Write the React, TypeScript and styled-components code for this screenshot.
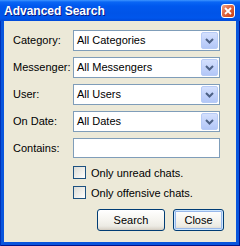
import React from "react";
import styled, { createGlobalStyle } from "styled-components";

const Global = createGlobalStyle`
  html, body { margin: 0; padding: 0; background: #ffffff; }
  body { font-family: "Liberation Sans", Arial, sans-serif; font-size: 11px; color: #000; }
`;

const Frame = styled.div`
  width: 240px;
  height: 246px;
  box-sizing: border-box;
  display: flex;
  flex-direction: column;
  background: #0855dd;
  box-shadow: inset 1px 0 0 #0032b8, inset -1px 0 0 #00138c, inset 0 -1px 0 #00138c;
`;

const TitleBar = styled.div`
  height: 21px;
  flex: none;
  display: flex;
  align-items: center;
  justify-content: space-between;
  padding: 0 5px 0 4px;
  background: linear-gradient(
    to bottom,
    #3d95ff 0px,
    #0a66f5 2px,
    #0058ee 6px,
    #0054e8 13px,
    #0056ec 18px,
    #0049d8 21px
  );
`;

const Title = styled.span`
  font-family: "Liberation Sans", Arial, sans-serif;
  font-weight: bold;
  font-size: 12px;
  color: #ffffff;
  text-shadow: 1px 1px 0 #0a1883;
  line-height: 14px;
  padding-top: 1px;
`;

const CloseBox = styled.div`
  width: 14px;
  height: 14px;
  box-sizing: border-box;
  border: 1px solid #ffffff;
  border-radius: 3px;
  background: linear-gradient(135deg, #f0a58b 0%, #e06a45 40%, #c93d14 100%);
  display: flex;
  align-items: center;
  justify-content: center;
`;

const Client = styled.div`
  flex: 1;
  margin: 0 4px 4px 4px;
  background: #ece9d8;
  padding: 9px 16px 0 9px;
  display: flex;
  flex-direction: column;
`;

const FormGrid = styled.div`
  display: grid;
  grid-template-columns: 60px 147px;
  row-gap: 6px;
  align-items: center;
`;

const Label = styled.label`
  font-size: 11px;
  line-height: 13px;
  color: #000;
`;

const Combo = styled.div`
  height: 21px;
  box-sizing: border-box;
  border: 1px solid #7f9db9;
  background: #ffffff;
  display: flex;
  align-items: center;
  justify-content: space-between;
  padding: 0 1px 0 3px;
`;

const ComboText = styled.span`
  font-size: 11px;
  line-height: 13px;
`;

const DropButton = styled.div`
  width: 17px;
  height: 17px;
  box-sizing: border-box;
  border: 1px solid #b7cbf6;
  border-radius: 2px;
  background: linear-gradient(to bottom, #d4e0fd 0%, #c3d3fb 50%, #b3c7f7 100%);
  display: flex;
  align-items: center;
  justify-content: center;
`;

const TextBox = styled.div`
  height: 20px;
  box-sizing: border-box;
  border: 1px solid #7f9db9;
  background: #ffffff;
`;

const Checks = styled.div`
  display: flex;
  flex-direction: column;
  gap: 7px;
  margin: 8px 0 0 60px;
`;

const CheckRow = styled.div`
  display: flex;
  align-items: center;
  gap: 5px;
`;

const CheckBox = styled.span`
  width: 13px;
  height: 13px;
  box-sizing: border-box;
  border: 1px solid #1c5180;
  background: linear-gradient(135deg, #dcdcd7 0%, #f0f0ec 60%, #ffffff 100%);
`;

const Buttons = styled.div`
  display: flex;
  justify-content: flex-end;
  gap: 8px;
  margin: 10px -4px 0 0;
`;

const Button = styled.button<{ $width: number; $focused?: boolean }>`
  width: ${(p) => p.$width}px;
  height: 22px;
  box-sizing: border-box;
  border: 1px solid #003c74;
  border-radius: 3px;
  font-family: "Liberation Sans", Arial, sans-serif;
  font-size: 11px;
  color: #000;
  padding: 0;
  background: linear-gradient(to bottom, #ffffff 0%, #f5f4ef 50%, #ecebe4 80%, #d6d0c5 100%);
  box-shadow: ${(p) =>
    p.$focused
      ? "inset 0 0 0 1px #cee7ff, inset 0 0 0 2px #98b8ea"
      : "inset 0 -1px 0 #d6d0c5"};
`;

const Chevron = () => (
  <svg width="9" height="6" viewBox="0 0 9 6">
    <path d="M1 1 L4.5 4.5 L8 1" fill="none" stroke="#4d6185" strokeWidth="2" />
  </svg>
);

const CloseX = () => (
  <svg width="8" height="8" viewBox="0 0 8 8">
    <path d="M1 1 L7 7 M7 1 L1 7" stroke="#ffffff" strokeWidth="1.8" />
  </svg>
);

const fields = [
  { label: "Category:", value: "All Categories" },
  { label: "Messenger:", value: "All Messengers" },
  { label: "User:", value: "All Users" },
  { label: "On Date:", value: "All Dates" },
];

export default function App() {
  return (
    <>
      <Global />
      <Frame>
        <TitleBar>
          <Title>Advanced Search</Title>
          <CloseBox>
            <CloseX />
          </CloseBox>
        </TitleBar>
        <Client>
          <FormGrid>
            {fields.map((f) => (
              <React.Fragment key={f.label}>
                <Label>{f.label}</Label>
                <Combo>
                  <ComboText>{f.value}</ComboText>
                  <DropButton>
                    <Chevron />
                  </DropButton>
                </Combo>
              </React.Fragment>
            ))}
            <Label>Contains:</Label>
            <TextBox />
          </FormGrid>
          <Checks>
            <CheckRow>
              <CheckBox />
              <span>Only unread chats.</span>
            </CheckRow>
            <CheckRow>
              <CheckBox />
              <span>Only offensive chats.</span>
            </CheckRow>
          </Checks>
          <Buttons>
            <Button $width={68}>Search</Button>
            <Button $width={51} $focused>
              Close
            </Button>
          </Buttons>
        </Client>
      </Frame>
    </>
  );
}
